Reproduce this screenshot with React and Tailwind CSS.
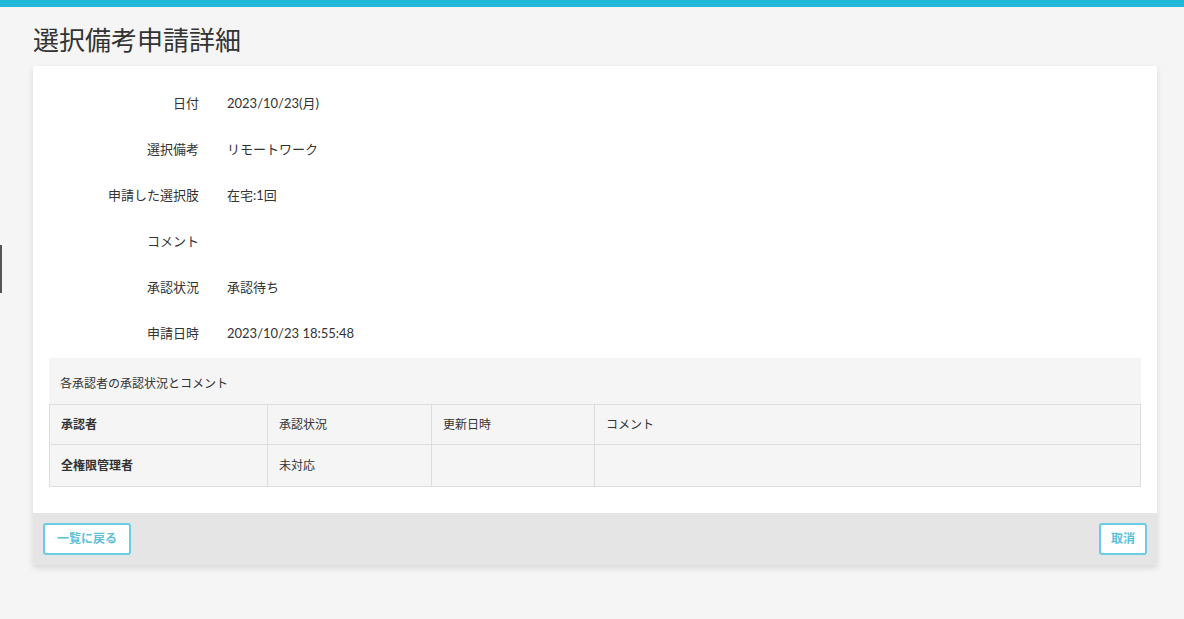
export default function App() {
  const rows = [
    ["日付", "2023/10/23(月)"],
    ["選択備考", "リモートワーク"],
    ["申請した選択肢", "在宅:1回"],
    ["コメント", ""],
    ["承認状況", "承認待ち"],
    ["申請日時", "2023/10/23 18:55:48"],
  ];

  return (
    <div
      className="min-h-[619px] bg-[#f5f5f5] relative text-[#333]"
      style={{ fontFamily: '"Lato", "Noto Sans CJK JP", sans-serif' }}
    >
      {/* top accent bar */}
      <div className="h-[7px] bg-[#1fb8d8]" />
      {/* sidebar handle */}
      <div className="absolute left-0 top-[245px] w-[2px] h-[48px] bg-[#555]" />

      <div className="pl-[33px] pr-[27px]">
        <h1 className="text-[26px] leading-[34px] pt-[16px] pb-[9px] text-[#333]">選択備考申請詳細</h1>

        <div className="bg-white rounded-[2px] shadow-[0_3px_6px_rgba(0,0,0,0.12)] overflow-hidden">
          <div className="pt-[15px] pb-[26px] px-[16px]">
            <div className="flex flex-col">
              {rows.map(([label, value]) => (
                <div key={label} className="flex items-center h-[46px] text-[13px]">
                  <div className="w-[150px] text-right text-[#333]">{label}</div>
                  <div className="pl-[28px] text-[#333]">{value}</div>
                </div>
              ))}
            </div>

            <div className="mt-[1px] bg-[#f5f5f5] pt-[17px]">
              <div className="px-[11px] text-[12px] text-[#333] pb-[11px]">各承認者の承認状況とコメント</div>
              <table className="w-full border-collapse text-[12px]">
                <thead>
                  <tr className="h-[40px]">
                    <th className="w-[218px] border border-[#ddd] text-left font-bold px-[11px]">承認者</th>
                    <th className="w-[164px] border border-[#ddd] text-left font-normal px-[11px]">承認状況</th>
                    <th className="w-[163px] border border-[#ddd] text-left font-normal px-[11px]">更新日時</th>
                    <th className="border border-[#ddd] text-left font-normal px-[11px]">コメント</th>
                  </tr>
                </thead>
                <tbody>
                  <tr className="h-[42px]">
                    <td className="border border-[#ddd] font-bold px-[11px]">全権限管理者</td>
                    <td className="border border-[#ddd] px-[11px]">未対応</td>
                    <td className="border border-[#ddd] px-[11px]"></td>
                    <td className="border border-[#ddd] px-[11px]"></td>
                  </tr>
                </tbody>
              </table>
            </div>
          </div>

          <div className="bg-[#e5e5e5] h-[52px] flex items-center justify-between px-[10px]">
            <button className="h-[32px] px-[12px] bg-white border-2 border-[#6acde3] rounded-[3px] text-[12px] font-bold text-[#5bbfd8]">
              一覧に戻る
            </button>
            <button className="h-[32px] px-[10px] bg-white border-2 border-[#6acde3] rounded-[3px] text-[12px] font-bold text-[#5bbfd8]">
              取消
            </button>
          </div>
        </div>
      </div>
    </div>
  );
}
